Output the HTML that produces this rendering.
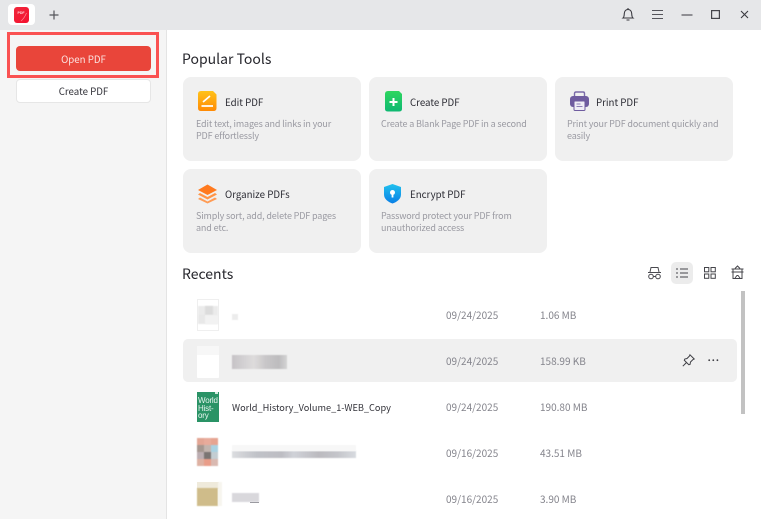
<!DOCTYPE html>
<html lang="en">
<head>
<meta charset="utf-8">
<title>PDF Tools</title>
<style>
*{box-sizing:border-box;margin:0;padding:0}
html,body{width:761px;height:519px;overflow:hidden;background:#fff;font-family:"Noto Sans CJK SC","Liberation Sans",sans-serif;color:#2b2b33}
.a{position:absolute}
.t{position:absolute;white-space:nowrap;line-height:1}
.card{position:absolute;background:#f0f0f0;border-radius:8px}
.ct{position:absolute;font-size:9.7px;line-height:14px;white-space:nowrap;color:#2b2b33}
.cd{position:absolute;font-size:9px;letter-spacing:-.14px;line-height:11.5px;white-space:nowrap;color:#9a9aa2}
.m{position:absolute;font-size:10px;line-height:14px;color:#83838b;white-space:nowrap}
.b{position:absolute;filter:blur(.6px)}
.g{position:absolute;display:grid;grid-template-columns:repeat(3,7px);grid-auto-rows:7px;filter:blur(.5px)}
svg{position:absolute;overflow:visible}
</style>
</head>
<body>
<div class="a" style="left:0;top:0;width:761px;height:30px;background:#e6e7e9"></div>
<div class="a" style="left:8px;top:4px;width:27px;height:21px;background:#fff;border-radius:4px"></div>
<div class="a" style="left:14px;top:7px;width:15px;height:16px;background:linear-gradient(135deg,#f0283c,#f5102f);border-radius:3px"></div>
<svg style="left:14px;top:7px" width="15" height="16"><path d="M7 14C9.500 12 11 9.500 12.500 6" stroke="#ff8a96" stroke-width=".7" fill="none"/><text x="3.500" y="7" font-size="3.500" font-weight="700" fill="#ffd9dd" font-family="Liberation Sans">PDF</text></svg>
<svg style="left:48px;top:9px" width="12" height="12"><path d="M6 1.500V10.500M1.500 6H10.500" stroke="#55555b" stroke-width="1.200"/></svg>

<svg style="left:621px;top:7px" width="14" height="15" fill="none" stroke="#3a3a40" stroke-width="1.100"><path d="M2 11C3.200 10 3.200 8.500 3.300 6.500C3.500 4 5 2.500 7 2.500C9 2.500 10.500 4 10.700 6.500C10.800 8.500 10.800 10 12 11Z"/><path d="M5.500 13H8.500M7 1V2.500"/></svg>
<svg style="left:651px;top:9px" width="13" height="12" stroke="#55555b" stroke-width="1.100"><path d="M1 1.500H12M1 5.500H12M1 9.500H12"/></svg>
<svg style="left:681px;top:14px" width="12" height="2"><path d="M.5 1H11.500" stroke="#55555b" stroke-width="1.200"/></svg>
<svg style="left:711px;top:10px" width="9" height="9"><rect x=".6" y=".6" width="7.800" height="7.800" fill="none" stroke="#46464c" stroke-width="1.200"/></svg>
<svg style="left:740px;top:10px" width="9" height="9"><path d="M1 1L8 8M8 1L1 8" stroke="#3a3a40" stroke-width="1.100"/></svg>

<div class="a" style="left:0;top:30px;width:167px;height:489px;background:#f5f5f5;border-right:1px solid #e4e4e4"></div>
<div class="a" style="left:16px;top:46px;width:135px;height:25px;background:#e9453a;border-radius:4px"></div>
<div class="t" style="left:16px;top:55px;width:135px;text-align:center;font-size:9.700px;color:#fbe3e0">Open PDF</div>
<div class="a" style="left:7px;top:32px;width:152px;height:46px;border:3px solid #fa5252"></div>
<div class="a" style="left:16px;top:79px;width:135px;height:24px;background:#fff;border:1px solid #e6e6e6;border-radius:4px"></div>
<div class="t" style="left:16px;top:87px;width:135px;text-align:center;font-size:9.700px;color:#33333a">Create PDF</div>

<div class="t" style="left:182px;top:52px;font-size:14px;color:#26262c">Popular Tools</div>

<div class="card" style="left:183px;top:77px;width:178px;height:84px"></div>
<div class="card" style="left:369px;top:77px;width:178px;height:84px"></div>
<div class="card" style="left:555px;top:77px;width:178px;height:84px"></div>
<div class="card" style="left:183px;top:169px;width:178px;height:84px"></div>
<div class="card" style="left:369px;top:169px;width:178px;height:84px"></div>

<svg style="left:198px;top:91px" width="20" height="21"><defs><linearGradient id="g1" x1="0" y1="0" x2="0" y2="1"><stop offset="0" stop-color="#ffc21a"/><stop offset="1" stop-color="#ff8a05"/></linearGradient></defs><path d="M3 0H15L18.500 3.500V17Q18.500 20 15.500 20H3Q0 20 0 17V3Q0 0 3 0Z" fill="url(#g1)"/><path d="M5 11L12 5M3.500 15H15" stroke="#fff" stroke-width="1.700" fill="none"/></svg>
<div class="ct" style="left:225px;top:95px">Edit PDF</div>
<div class="cd" style="left:196px;top:118px">Edit text, images and links in your<br>PDF effortlessly</div>

<svg style="left:385px;top:91px" width="17" height="21"><defs><linearGradient id="g2" x1="0" y1="0" x2="0" y2="1"><stop offset="0" stop-color="#2ed65f"/><stop offset="1" stop-color="#0fb872"/></linearGradient></defs><path d="M3 0H14L17 3V18Q17 20.500 14 20.500H3Q0 20.500 0 18V3Q0 0 3 0Z" fill="url(#g2)"/><path d="M8.500 7V15M4.500 11H12.500" stroke="#fff" stroke-width="2"/></svg>
<div class="ct" style="left:410px;top:95px">Create PDF</div>
<div class="cd" style="left:381px;top:118px">Create a Blank Page PDF in a second</div>

<svg style="left:570px;top:91px" width="20" height="20"><path d="M4.500 5V2.500Q4.500 1 6 1H13Q14.500 1 14.500 2.500V5" fill="none" stroke="#7a6aa8" stroke-width="1.400"/><rect x="0" y="5" width="19" height="11" rx="3" fill="#6f5c9f"/><rect x="4" y="10" width="11" height="9.500" rx="1" fill="#f0eef6" stroke="#6f5c9f" stroke-width="1"/><path d="M6.500 13H10.500M6.500 15.500H12.500" stroke="#8c7db5" stroke-width="1"/></svg>
<div class="ct" style="left:596px;top:95px">Print PDF</div>
<div class="cd" style="left:567px;top:118px">Print your PDF document quickly and<br>easily</div>

<svg style="left:198px;top:184px" width="20" height="20"><path d="M9.500 .5L19 6L9.500 11L0 6Z" fill="#ff7a1f"/><path d="M2 9L0 10.500L9.500 15.500L19 10.500L17 9L9.500 13Z" fill="#ff9447"/><path d="M2 13.500L0 15L9.500 19.500L19 15L17 13.500L9.500 17.500Z" fill="#ff9c55"/></svg>
<div class="ct" style="left:225px;top:187px">Organize PDFs</div>
<div class="cd" style="left:196px;top:210px">Simply sort, add, delete PDF pages<br>and etc.</div>

<svg style="left:384px;top:184px" width="18" height="20"><defs><linearGradient id="g3" x1="0" y1="0" x2="0" y2="1"><stop offset="0" stop-color="#21c1ee"/><stop offset="1" stop-color="#0a7fe6"/></linearGradient></defs><path d="M8.500 0L17 3V10.500C17 15 13 18 8.500 19.500C4 18 0 15 0 10.500V3Z" fill="url(#g3)"/><circle cx="8.500" cy="8.500" r="2.500" fill="#fff"/><path d="M8.500 9V13.500" stroke="#fff" stroke-width="1.800"/></svg>
<div class="ct" style="left:410px;top:187px">Encrypt PDF</div>
<div class="cd" style="left:381px;top:210px">Password protect your PDF from<br>unauthorized access</div>

<div class="t" style="left:182px;top:267px;font-size:14px;color:#26262c">Recents</div>

<svg style="left:647px;top:266px" width="15" height="14" fill="none" stroke="#4a4a50" stroke-width="1"><path d="M3 6L4 1.500H11L12 6M1 6.500H14"/><circle cx="4" cy="10.500" r="2.300"/><circle cx="11" cy="10.500" r="2.300"/><path d="M6.300 10.500H8.700"/></svg>
<div class="a" style="left:671px;top:262px;width:22px;height:22px;background:#ececec;border-radius:5px"></div>
<svg style="left:676px;top:267px" width="12" height="12" stroke="#44444a" stroke-width="1"><path d="M0 2H2M4 2H12M0 6H2M4 6H12M0 10H2M4 10H12"/></svg>
<svg style="left:704px;top:267px" width="12" height="12" fill="none" stroke="#44444a" stroke-width="1"><rect x=".5" y=".5" width="4.300" height="4.300"/><rect x="7" y=".5" width="4.300" height="4.300"/><rect x=".5" y="7" width="4.300" height="4.300"/><rect x="7" y="7" width="4.300" height="4.300"/></svg>
<svg style="left:731px;top:265px" width="13" height="15" fill="none" stroke="#44444a" stroke-width="1"><path d="M4 3.500L6.500 1L9 3.500M.5 4H12.500M2 4V13.500H11V4M.5 7H12.500M4 13L6 10.500H7L9 13"/></svg>

<div class="a" style="left:183px;top:339px;width:554px;height:43px;background:#f0f0f0;border-radius:5px"></div>
<div class="a" style="left:741px;top:291px;width:4px;height:123px;background:#c2c2c2"></div>

<div class="a" style="left:197px;top:299px;width:22px;height:32px;background:#fff;border:1px solid #efefef"></div>
<div class="b" style="left:198px;top:306px;width:20px;height:18px;background:linear-gradient(#ebebeb 0 50%,#e8e8e8 50%)"></div>
<div class="b" style="left:205px;top:306px;width:8px;height:9px;background:#dcdcdc"></div>
<div class="b" style="left:205px;top:315px;width:13px;height:9px;background:#f2f2f2"></div>
<div class="b" style="left:232px;top:314px;width:6px;height:6px;background:#ececec"></div>

<div class="a" style="left:197px;top:346px;width:22px;height:32px;background:#fff;border-radius:1px"></div>
<div class="a" style="left:197px;top:346px;width:22px;height:9px;background:#f7f7f7"></div>
<div class="b" style="left:232px;top:355px;width:55px;height:14px;background:linear-gradient(90deg,#c6c3c6,#d5d3d5 25%,#dedcdc 40%,#c9c7c9 60%,#bdbcbe 85%,#d4d4d4)"></div>

<svg style="left:682px;top:354px" width="13" height="13" fill="none" stroke="#3e3e44" stroke-width="1"><path d="M8 .8L12.200 5L11 5.500L8.500 8L8 10.500L6.800 10.700L2.300 6.200L2.800 5L5 4.500L7.500 2Z"/><path d="M4.500 8.500L.8 12.200"/></svg>
<svg style="left:708px;top:359px" width="11" height="3" fill="#3e3e44"><circle cx="1.200" cy="1.200" r=".9"/><circle cx="5.300" cy="1.200" r=".9"/><circle cx="9.400" cy="1.200" r=".9"/></svg>

<div class="a" style="left:197px;top:392px;width:22px;height:30px;background:#2a9366;overflow:hidden;color:#e8f5ef;font:8px/7.500px 'Liberation Sans',sans-serif;padding:5px 0 0 1px;letter-spacing:-.2px">World<br>Hist-<br>ory</div>
<div class="a" style="left:215px;top:392px;width:3px;height:2px;background:#d5ebe0"></div>
<div class="t" style="left:232px;top:403px;font-size:9.200px;color:#33333a">World_History_Volume_1-WEB_Copy</div>

<div class="g" style="left:197px;top:438px">
<div style="background:#e3a594"></div><div style="background:#e8ab9b"></div><div style="background:#e6a491"></div>
<div style="background:#a59790"></div><div style="background:#c2b4ae"></div><div style="background:#a9d2e2"></div>
<div style="background:#bcaeb2"></div><div style="background:#7b7573"></div><div style="background:#c3cdd2"></div>
<div style="background:#deb1a2"></div><div style="background:#e99d89"></div><div style="background:#d9b9b1"></div>
</div>
<div class="b" style="left:232px;top:451px;width:124px;height:7px;background:linear-gradient(90deg,#dcdde0,#c0c2c8 20%,#bdbdc3 40%,#d0d2d8 50%,#bbbabf 70%,#c4c5ca 85%,#d8dbe0)"></div>
<div class="b" style="left:232px;top:445px;width:124px;height:6px;background:#f7f7f7"></div>

<div class="a" style="left:197px;top:482px;width:22px;height:7px;background:#efeadb"></div>
<div class="b" style="left:197px;top:488px;width:21px;height:18px;background:#cfbc8a"></div>
<div class="b" style="left:218px;top:482px;width:4px;height:24px;background:#f7f5ee"></div>
<div class="b" style="left:232px;top:493px;width:27px;height:9px;background:#d9d8dc"></div>
<div class="a" style="left:250px;top:502px;width:9px;height:1px;background:#9a9aa0"></div>

<div class="m" style="left:446px;top:308px">09/24/2025</div><div class="m" style="left:540px;top:308px">1.06 MB</div>
<div class="m" style="left:446px;top:354px">09/24/2025</div><div class="m" style="left:540px;top:354px">158.99 KB</div>
<div class="m" style="left:446px;top:400px">09/24/2025</div><div class="m" style="left:540px;top:400px">190.80 MB</div>
<div class="m" style="left:446px;top:446px">09/16/2025</div><div class="m" style="left:540px;top:446px">43.51 MB</div>
<div class="m" style="left:446px;top:492px">09/16/2025</div><div class="m" style="left:540px;top:492px">3.90 MB</div>
</body>
</html>
